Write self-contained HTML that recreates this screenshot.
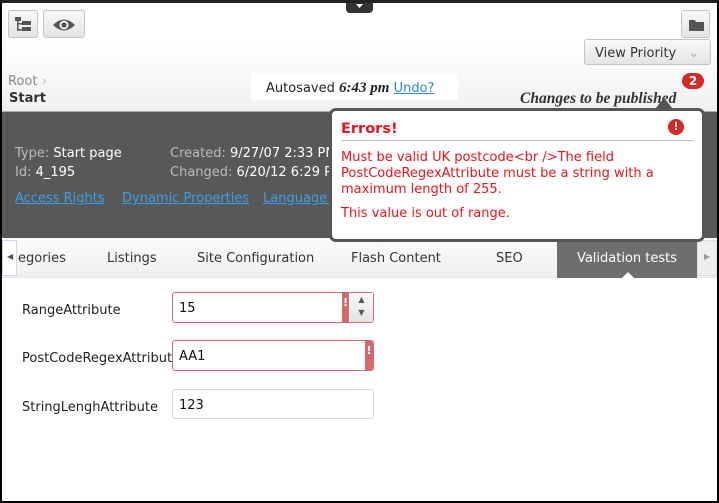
<!DOCTYPE html>
<html><head><style>
*{box-sizing:border-box;margin:0;padding:0}
body{width:719px;height:503px;overflow:hidden;background:#fff;font-family:"DejaVu Sans","Liberation Sans",sans-serif;font-size:13px;position:relative;color:#333}
.a{position:absolute}
.frame{left:0;top:0;width:719px;height:503px;border:2px solid #000;border-top:3px solid #222;z-index:50;pointer-events:none}
.hdr{left:0;top:0;width:719px;height:111px;background:linear-gradient(#fff 0%,#fff 40%,#f0f0f0 100%)}
.btn{border:1px solid #c4c4c4;border-radius:3px;background:linear-gradient(#f8f8f8,#e4e4e4)}
.dark{left:0;top:111px;width:719px;height:127px;background:#585858;border-top:1px solid #aaa}
.tabs{left:0;top:238px;width:719px;height:40px;background:linear-gradient(#fafafa,#f0f0f0);border-bottom:1px solid #e6e6e6}
.tab{top:251px;font-size:13px;color:#333}
.lbl{font-size:13px;color:#222}
.inp{border:1px solid #d8d8d8;border-radius:3px;background:#fff;font-size:13px;padding:8px 6px;color:#111}
.err{border-color:#d46a6a}
.lnk{color:#3aa0e8;text-decoration:underline;font-size:13px}
</style></head><body>
<div class="a hdr"></div>
<div class="a btn" style="left:8px;top:10px;width:30px;height:28px"><svg width="30" height="28"><rect x="6" y="6" width="6" height="4" fill="#555"/><rect x="8" y="10" width="1.5" height="10" fill="#555"/><rect x="9" y="12" width="4" height="1.5" fill="#555"/><rect x="9" y="18" width="4" height="1.5" fill="#555"/><rect x="13" y="10" width="9" height="4" fill="#555"/><rect x="13" y="16" width="9" height="4" fill="#555"/></svg></div>
<div class="a btn" style="left:43px;top:10px;width:42px;height:28px"><svg width="42" height="28"><path d="M9 14 Q20 3 31 14 Q20 25 9 14Z" fill="#555"/><circle cx="20" cy="14" r="4.5" fill="#eee"/><circle cx="20" cy="14" r="2.6" fill="#555"/></svg></div>
<div class="a" style="left:346px;top:0;width:27px;height:13px;background:#333;border-radius:0 0 4px 4px"><svg width="27" height="13"><path d="M10 4 L17 4 L13.5 8Z" fill="#fff"/></svg></div>
<div class="a btn" style="left:681px;top:10px;width:29px;height:28px"><svg width="29" height="28"><path d="M7 9 H13 L14 11 H22 V20 H7Z" fill="#555"/></svg></div>
<div class="a btn" style="left:584px;top:39px;width:127px;height:26px;font-size:13px;line-height:28px;padding-left:10px;color:#333">View Priority <span style="color:#aaa;margin-left:8px">&#8964;</span></div>
<div class="a" style="left:8px;top:74px;color:#888;font-size:13px">Root <span style="color:#bbb">&#x203A;</span></div>
<div class="a" style="left:9px;top:91px;color:#333;font-size:13px;font-weight:bold">Start</div>
<div class="a" style="left:251px;top:73px;width:207px;height:27px;background:#fff;border-radius:3px;font-size:13px;line-height:30px;padding-left:15px;color:#222">Autosaved <b style="font-family:'Liberation Serif',serif;font-style:italic;font-size:15px">6:43 pm</b> <span style="color:#2a8ad8;text-decoration:underline">Undo?</span></div>
<div class="a" style="left:682px;top:73px;width:22px;height:16px;background:#d62828;border-radius:8px;color:#fff;font-weight:bold;font-size:12px;text-align:center;line-height:16px">2</div>
<div class="a" style="left:520px;top:90px;font-family:'Liberation Serif',serif;font-style:italic;font-weight:bold;font-size:15.5px;color:#333">Changes to be published</div>
<div class="a dark"></div>
<div class="a" style="left:15px;top:146px;color:#bbb;font-size:13px">Type: <span style="color:#fff">Start page</span></div>
<div class="a" style="left:15px;top:165px;color:#bbb;font-size:13px">Id: <span style="color:#fff">4_195</span></div>
<div class="a" style="left:170px;top:146px;color:#bbb;font-size:13px">Created: <span style="color:#fff">9/27/07 2:33 PM</span></div>
<div class="a" style="left:170px;top:165px;color:#bbb;font-size:13px">Changed: <span style="color:#fff">6/20/12 6:29 PM</span></div>
<div class="a lnk" style="left:15px;top:191px">Access Rights</div>
<div class="a lnk" style="left:122px;top:191px">Dynamic Properties</div>
<div class="a lnk" style="left:263px;top:191px">Language settings</div>
<div class="a tabs"></div>
<div class="a" style="left:2px;top:240px;width:15px;height:36px;background:#fff;border:1px solid #cfd8e8"><span style="position:absolute;left:4px;top:11px;font-size:8px;color:#555">&#9664;</span></div>
<div class="a tab" style="left:18px">egories</div>
<div class="a tab" style="left:107px">Listings</div>
<div class="a tab" style="left:197px">Site Configuration</div>
<div class="a tab" style="left:351px">Flash Content</div>
<div class="a tab" style="left:496px">SEO</div>
<div class="a" style="left:557px;top:238px;width:140px;height:40px;background:#6e6e6e;color:#fff;text-align:center;line-height:42px;font-size:13px">Validation tests</div>
<div class="a" style="left:622px;top:272px;width:0;height:0;border:6px solid transparent;border-bottom-color:#fff;border-top:0"></div>
<div class="a" style="left:697px;top:240px;width:20px;height:36px;background:#eee;border:1px solid #ddd"><span style="position:absolute;left:6px;top:11px;font-size:8px;color:#999">&#9654;</span></div>
<div class="a lbl" style="left:22px;top:303px">RangeAttribute</div>
<div class="a inp err" style="left:172px;top:292px;width:202px;height:31px">15</div>
<div class="a" style="left:342px;top:293px;width:7px;height:29px;background:#d46a6a;color:#fff;font-size:11px;font-weight:bold;text-align:center;line-height:20px">!</div>
<div class="a" style="left:350px;top:293px;width:23px;height:29px;background:linear-gradient(#fafafa,#e2e2e2);font-size:8px;color:#555;text-align:center;line-height:13px">&#9650;<br>&#9660;</div>
<div class="a lbl" style="left:22px;top:351px">PostCodeRegexAttribut</div>
<div class="a inp err" style="left:172px;top:340px;width:202px;height:31px;background:transparent">AA1</div>
<div class="a" style="left:365px;top:341px;width:8px;height:29px;background:#d46a6a;color:#fff;font-size:11px;font-weight:bold;text-align:center;line-height:20px;border-radius:0 2px 2px 0">!</div>
<div class="a lbl" style="left:22px;top:400px">StringLenghAttribute</div>
<div class="a inp" style="left:172px;top:389px;width:202px;height:30px">123</div>
<div class="a" style="left:329px;top:108px;width:376px;height:134px;background:#fff;border:3px solid #555;border-radius:7px;z-index:5"></div>
<div class="a" style="left:655px;top:98px;width:0;height:0;border-left:9px solid transparent;border-right:9px solid transparent;border-bottom:11px solid #555;z-index:6"></div>
<div class="a" style="left:341px;top:121px;color:#e8141c;font-weight:bold;font-size:14.5px;z-index:7">Errors!</div>
<div class="a" style="left:668px;top:119px;width:16px;height:16px;border-radius:8px;background:#d62828;color:#fff;font-size:11px;font-weight:bold;text-align:center;line-height:16px;z-index:7">!</div>
<div class="a" style="left:341px;top:140px;width:353px;height:1px;background:#bbb;z-index:7"></div>
<div class="a" style="left:341px;top:150px;width:355px;color:#e8141c;font-size:13px;line-height:16px;z-index:7">Must be valid UK postcode&lt;br /&gt;The field PostCodeRegexAttribute must be a string with a maximum length of 255.</div>
<div class="a" style="left:341px;top:206px;color:#e8141c;font-size:13px;z-index:7">This value is out of range.</div>
<div class="a frame"></div>
</body></html>
